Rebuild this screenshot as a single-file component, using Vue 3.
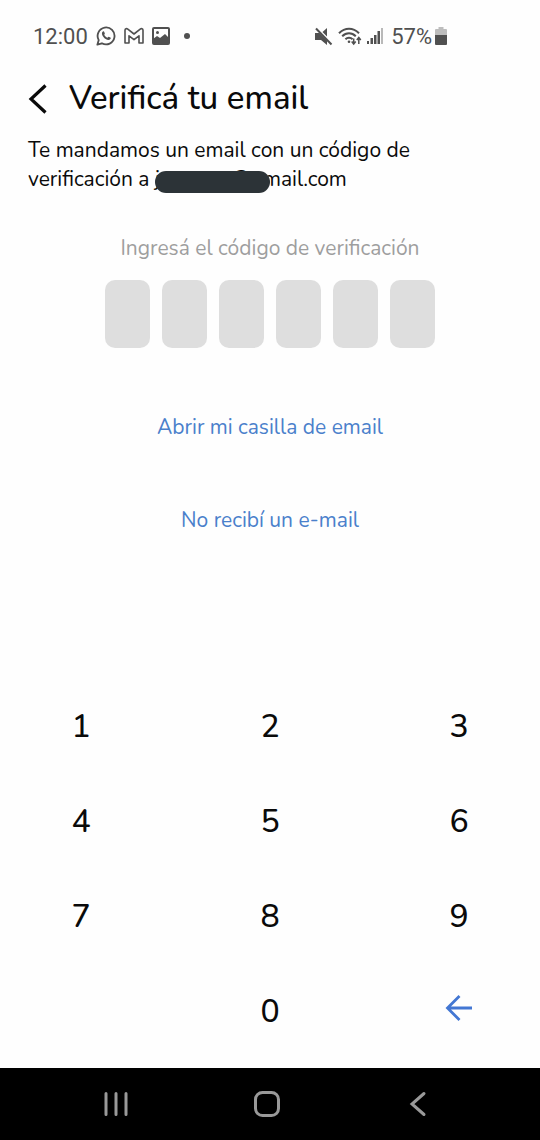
<script setup>
import { ref } from 'vue'

const keys = ['1', '2', '3', '4', '5', '6', '7', '8', '9']
const code = ref(['', '', '', '', '', ''])

function press(digit) {
  const slot = code.value.findIndex((value) => value === '')
  if (slot !== -1) code.value[slot] = digit
}

function erase() {
  const slot = code.value.findLastIndex((value) => value !== '')
  if (slot !== -1) code.value[slot] = ''
}
</script>

<template>
  <div class="screen">
    <div class="status">
      <div class="status-group">
        <span class="clock">12:00</span>
        <svg width="20" height="20" viewBox="0 0 22 22" fill="none" stroke="#505050" stroke-width="2">
          <path d="M1.500 20.500l1.500-5A9.300 9.300 0 1 1 6.500 19z" stroke-linejoin="round" />
          <path d="M7.300 6.200c.8-.8 1.500-.4 1.800.4l.6 1.600c.2.600-.9 1.200-.6 1.700.7 1.300 1.800 2.300 3.200 2.900.6.2 1.100-1.200 1.700-1l1.800.9c.6.3.5 1.200 0 1.700-1.300 1.500-3.300 1.100-5.200-.2-1.800-1.200-3.200-2.900-3.800-4.700-.4-1.300-.3-2.500.5-3.300z" fill="#505050" stroke="none" />
        </svg>
        <svg width="20" height="18" viewBox="0 0 20 18" fill="none" stroke="#505050" stroke-width="1.600" stroke-linejoin="round">
          <path d="M1 16V3.200C1 1.600 2.600 1.200 3.800 2.100L10 7l6.200-4.900C17.400 1.200 19 1.600 19 3.200V16h-4V8.800l-5 3.900-5-3.900V16z" />
        </svg>
        <svg width="18" height="18" viewBox="0 0 18 18">
          <rect x="1" y="1" width="16" height="16" rx="1" fill="none" stroke="#505050" stroke-width="2" />
          <circle cx="5.500" cy="5.500" r="1.500" fill="#505050" />
          <path d="M1 17v-5l4-3 3 2 5-4 4 4v6z" fill="#505050" />
        </svg>
        <span class="dot"></span>
      </div>
      <div class="status-group status-right">
        <svg width="19" height="19" viewBox="0 0 19 19" fill="#505050">
          <path d="M1 6h4.500l7.500 7.500V18l-6-5H1zM8.500 5L13 1v8.500z" />
          <path d="M2 1.500L17.500 17.500" stroke="#505050" stroke-width="2" />
        </svg>
        <svg width="24" height="19" viewBox="0 0 24 19" fill="none" stroke="#505050" stroke-width="2">
          <path d="M1 6.200C7 .2 15 .2 21 6.200M4.200 9.300c4-4 9.600-4 13.600 0M7.400 12.200c2-2 5.200-2 7.200 0" />
          <circle cx="11" cy="14.800" r="1.300" fill="#505050" stroke="none" />
          <path d="M15.700 11.500v5M13.700 14.500l2 2.500 2-2.500M20.800 17v-6M18.800 13l2-2.500 2 2.500" stroke-width="1.500" />
        </svg>
        <svg width="16" height="18" viewBox="0 0 16 18" fill="#505050">
          <path d="M0 14h2v3H0zM3.500 11H6v6H3.500zM7 8h2.500v9H7zM10.500 4H13v13h-2.500z" />
          <path d="M14 1h2v16h-2z" fill="#b9b9b9" />
        </svg>
        <div class="battery">
          <span>57%</span>
          <svg width="12" height="18" viewBox="0 0 12 18">
            <path d="M3.500 0h5v2H11q1 0 1 1v6H0V3q0-1 1-1h2.500z" fill="#bdbdbd" />
            <path d="M0 8h12v9q0 1-1 1H1q-1 0-1-1z" fill="#505050" />
          </svg>
        </div>
      </div>
    </div>

    <main>
      <header>
        <button class="back" type="button" aria-label="Volver">
          <svg width="20" height="32" viewBox="0 0 20 32" fill="none" stroke="#0a0a0a" stroke-width="3.200">
            <path d="M17.500 2.500L3 16l14.500 13.500" />
          </svg>
        </button>
        <h1>Verificá tu email</h1>
      </header>

      <p class="intro">
        Te mandamos un email con un código de<br />verificación a <span class="redacted"><span>j</span><span>@g</span></span>mail.com
      </p>

      <form @submit.prevent>
        <fieldset>
          <legend>Ingresá el código de verificación</legend>
          <div class="boxes">
            <input
              v-for="(value, i) in code"
              :key="i"
              v-model="code[i]"
              type="text"
              inputmode="numeric"
              maxlength="1"
              :aria-label="`Dígito ${i + 1}`"
            />
          </div>
        </fieldset>
      </form>

      <nav class="links">
        <a href="#casilla">Abrir mi casilla de email</a>
        <a href="#reenviar">No recibí un e-mail</a>
      </nav>
    </main>

    <div class="keypad">
      <button v-for="key in keys" :key="key" type="button" @click="press(key)">{{ key }}</button>
      <button class="zero" type="button" @click="press('0')">0</button>
      <button class="erase" type="button" aria-label="Borrar" @click="erase">
        <svg width="28" height="28" viewBox="0 0 28 28" fill="none" stroke="#4377d3" stroke-width="2.800">
          <path d="M27 14H3M14.500 2L2.500 14l12 12" />
        </svg>
      </button>
    </div>

    <footer>
      <button type="button" aria-label="Recientes">
        <svg width="26" height="26" viewBox="0 0 26 26" stroke="#999" stroke-width="3" stroke-linecap="round">
          <path d="M3 2.500v21M13 2.500v21M23 2.500v21" />
        </svg>
      </button>
      <button type="button" aria-label="Inicio">
        <svg width="26" height="26" viewBox="0 0 26 26" fill="none" stroke="#999" stroke-width="3">
          <rect x="1.500" y="1.500" width="23" height="23" rx="7" />
        </svg>
      </button>
      <button type="button" aria-label="Atrás">
        <svg width="26" height="26" viewBox="0 0 26 26" fill="none" stroke="#999" stroke-width="3" stroke-linecap="round">
          <path d="M19 2.500L7 13l12 10.500" />
        </svg>
      </button>
    </footer>
  </div>
</template>

<style>
body {
  margin: 0;
  background: #fff;
}
</style>

<style scoped>
.screen {
  min-height: 100vh;
  display: flex;
  flex-direction: column;
  background: #fefefe;
  color: #0a0a0a;
  font-family: Nunito, "Noto Sans", sans-serif;
}

svg {
  display: block;
  flex: none;
}

button {
  display: flex;
  align-items: center;
  justify-content: center;
  padding: 0;
  border: 0;
  background: none;
  color: inherit;
  font: inherit;
  cursor: pointer;
}

.status {
  height: 72px;
  padding: 0 93px 0 33px;
  display: flex;
  justify-content: space-between;
  align-items: center;
  color: #505050;
  font-family: Roboto, sans-serif;
  font-size: 22px;
}

.status-group {
  display: flex;
  align-items: center;
  gap: 8px;
}

.status-right {
  gap: 5px;
}

.battery {
  display: flex;
  align-items: center;
  gap: 3px;
  margin-left: 3px;
}

.dot {
  width: 6px;
  height: 6px;
  margin-left: 6px;
  border-radius: 50%;
  background: #505050;
}

main {
  padding: 0 28px;
}

header {
  height: 54px;
  display: flex;
  align-items: center;
  gap: 21px;
}

h1 {
  margin: 0;
  font-size: 33px;
  line-height: 42px;
  font-weight: 500;
}

.intro {
  margin: 10px 0 0;
  font-size: 21px;
  line-height: 29px;
}

.redacted {
  position: relative;
  display: inline-flex;
  justify-content: space-between;
  width: 108px;
}

.redacted::after {
  content: "";
  position: absolute;
  top: 6px;
  left: 0;
  width: 115px;
  height: 22px;
  border-radius: 11px;
  background: #2c3337;
}

fieldset {
  margin: 40px 0 0;
  padding: 0;
  border: 0;
}

legend {
  width: 100%;
  padding: 0;
  text-align: center;
  font-size: 21px;
  line-height: 29px;
  color: #9e9e9e;
}

.boxes {
  display: flex;
  justify-content: center;
  gap: 12px;
  margin-top: 17px;
}

.boxes input {
  box-sizing: border-box;
  width: 45px;
  height: 68px;
  padding: 0;
  border: 0;
  border-radius: 10px;
  background: #dedede;
  text-align: center;
  font: inherit;
  font-size: 32px;
}

.links {
  margin-top: 65px;
  display: flex;
  flex-direction: column;
  align-items: center;
  gap: 64px;
}

.links a {
  font-size: 21px;
  line-height: 29px;
  color: #4a80cb;
  text-decoration: none;
}

.keypad {
  margin-top: auto;
  padding: 0 56px 9px;
  display: grid;
  grid-template-columns: repeat(3, 50px);
  grid-auto-rows: 95px;
  justify-content: space-between;
}

.keypad button {
  font-size: 32px;
  line-height: 40px;
  font-weight: 500;
}

.keypad .zero {
  grid-column: 2;
}

.keypad .erase {
  padding-bottom: 8px;
}

footer {
  height: 72px;
  padding: 0 98px 0 92px;
  display: flex;
  align-items: center;
  justify-content: space-between;
  background: #000;
}

footer button {
  width: 48px;
  height: 48px;
}
</style>
